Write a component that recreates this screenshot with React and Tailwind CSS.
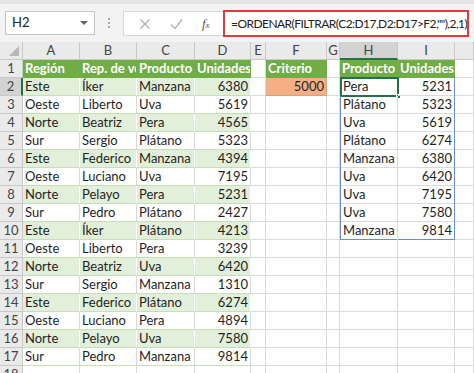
import React from 'react';

const font = { fontFamily: 'Lato, "Open Sans", sans-serif' };

const cols = ['A', 'B', 'C', 'D', 'E', 'F', 'G', 'H', 'I', ''];

const data = [
  ['Este', 'Íker', 'Manzana', 6380],
  ['Oeste', 'Liberto', 'Uva', 5619],
  ['Norte', 'Beatriz', 'Pera', 4565],
  ['Sur', 'Sergio', 'Plátano', 5323],
  ['Este', 'Federico', 'Manzana', 4394],
  ['Oeste', 'Luciano', 'Uva', 7195],
  ['Norte', 'Pelayo', 'Pera', 5231],
  ['Sur', 'Pedro', 'Plátano', 2427],
  ['Este', 'Íker', 'Plátano', 4213],
  ['Oeste', 'Liberto', 'Pera', 3239],
  ['Norte', 'Beatriz', 'Uva', 6420],
  ['Sur', 'Sergio', 'Manzana', 1310],
  ['Este', 'Federico', 'Plátano', 6274],
  ['Oeste', 'Luciano', 'Pera', 4894],
  ['Norte', 'Pelayo', 'Uva', 7580],
  ['Sur', 'Pedro', 'Manzana', 9814],
];

const sorted = [
  ['Pera', 5231],
  ['Plátano', 5323],
  ['Uva', 5619],
  ['Plátano', 6274],
  ['Manzana', 6380],
  ['Uva', 6420],
  ['Uva', 7195],
  ['Uva', 7580],
  ['Manzana', 9814],
];

const grid = 'grid grid-cols-[23px_57px_57px_58px_56px_15px_61px_13px_58px_57px_1fr]';

function Cell({ children, className = '' }) {
  return (
    <div className={`h-[18px] overflow-hidden whitespace-nowrap border-r border-b px-[2px] leading-[17px] text-[13px] text-[#1f1f1f] ${className}`}>
      {children}
    </div>
  );
}

function FormulaBar() {
  return (
    <div className="h-[42px] bg-[#f3f3f3] border-t-[4px] border-[#e4e4e4] flex items-start pt-[7px] pl-[5px]">
      <div className="w-[90px] h-[24px] bg-white border border-[#c6c6c6] flex items-center justify-between pl-[6px] pr-[6px] text-[13px] text-[#222]">
        <span>H2</span>
        <span className="w-0 h-0 border-l-[4px] border-r-[4px] border-t-[4px] border-l-transparent border-r-transparent border-t-[#666]" />
      </div>
      <div className="w-[28px] h-[24px] flex flex-col items-center justify-center gap-[2px]">
        <span className="w-[2px] h-[2px] bg-[#aaa]" />
        <span className="w-[2px] h-[2px] bg-[#aaa]" />
        <span className="w-[2px] h-[2px] bg-[#aaa]" />
      </div>
      <div className="w-[100px] h-[25px] bg-white border border-[#d6d6d6] border-r-0 flex items-center justify-around pl-[6px] pr-[2px]">
        <svg width="12" height="12" viewBox="0 0 12 12"><path d="M1.5 1.5l9 9M10.5 1.5l-9 9" stroke="#b0b0b0" strokeWidth="1.3" /></svg>
        <svg width="13" height="12" viewBox="0 0 13 12"><path d="M1 6.5l4 4L12 1.5" stroke="#b0b0b0" strokeWidth="1.3" fill="none" /></svg>
        <span className="italic text-[13px] leading-none text-[#555] pr-[2px]" style={{ fontFamily: '"Liberation Serif", serif' }}>f<span className="text-[9px]">x</span></span>
      </div>
      <div className="h-[27px] -mt-[1px] w-[246px] border-2 border-[#e0393e] bg-white flex items-center pl-[6px] text-[12px] tracking-[-0.55px] text-[#222] whitespace-nowrap overflow-hidden">
        =ORDENAR(FILTRAR(C2:D17,D2:D17&gt;F2,""),2,1)
      </div>
    </div>
  );
}

export default function App() {
  const rows = [];
  for (let r = 1; r <= 18; r++) rows.push(r);

  return (
    <div className="w-[474px] h-[373px] overflow-hidden bg-white" style={font}>
      <FormulaBar />
      <div className={grid}>
        <div className="h-[18px] bg-[#eaeaea] border-r border-b border-[#c8c8c8] relative">
          <svg className="absolute right-[3px] bottom-[3px]" width="10" height="10" viewBox="0 0 10 10"><path d="M10 0V10H0Z" fill="#b8b8b8" /></svg>
        </div>
        {cols.map((c, i) => (
          <div
            key={i}
            className={`h-[18px] border-r border-b text-center text-[13px] leading-[17px] text-[#444] ${c === 'H' ? 'bg-[#d3d3d3] border-b-2 border-b-[#217346] border-r-[#c8c8c8]' : 'bg-[#eaeaea] border-[#c8c8c8]'}`}
          >
            {c}
          </div>
        ))}

        {rows.map((r) => {
          const header = r === 1;
          const band = r % 2 === 0 && r <= 17;
          const d = data[r - 2];
          const s = sorted[r - 2];
          const tbl = r <= 17;
          const tblBg = header ? 'bg-[#70ad47]' : band ? 'bg-[#e2efda]' : 'bg-white';
          const tblBorder = header ? 'border-[#70ad47]' : band ? 'border-r-white border-b-[#c6e0b4]' : 'border-r-[#d9d9d9] border-b-[#c6e0b4]';
          const txt = header ? 'font-bold text-white' : '';
          const spill = r >= 2 && r <= 10;
          return (
            <React.Fragment key={r}>
              <div
                className={`h-[18px] border-b text-center text-[13px] leading-[17px] text-[#444] ${r === 2 ? 'bg-[#d3d3d3] border-r-2 border-r-[#217346] border-b-[#c8c8c8]' : 'bg-[#eaeaea] border-r border-[#c8c8c8]'}`}
              >
                {r}
              </div>
              {tbl ? (
                <>
                  <Cell className={`${tblBg} ${tblBorder} ${txt}`}>{header ? 'Región' : d[0]}</Cell>
                  <Cell className={`${tblBg} ${tblBorder} ${txt}`}>{header ? 'Rep. de ventas' : d[1]}</Cell>
                  <Cell className={`${tblBg} ${tblBorder} ${txt}`}>{header ? 'Producto' : d[2]}</Cell>
                  <Cell className={`${tblBg} ${tblBorder} ${txt} ${header ? '' : 'text-right'}`}>{header ? 'Unidades' : d[3]}</Cell>
                </>
              ) : (
                <>
                  <Cell className="border-[#dadada]" />
                  <Cell className="border-[#dadada]" />
                  <Cell className="border-[#dadada]" />
                  <Cell className="border-[#dadada]" />
                </>
              )}
              <Cell className="border-[#dadada]" />
              {header ? (
                <Cell className="bg-[#70ad47] border-[#70ad47] font-bold text-white">Criterio</Cell>
              ) : r === 2 ? (
                <Cell className="bg-[#f4b084] border-[#d9a07a] text-right">5000</Cell>
              ) : (
                <Cell className="border-[#dadada]" />
              )}
              <Cell className="border-[#dadada]" />
              {header ? (
                <>
                  <Cell className="bg-[#70ad47] border-[#70ad47] font-bold text-white">Producto</Cell>
                  <Cell className="bg-[#70ad47] border-[#70ad47] font-bold text-white">Unidades</Cell>
                </>
              ) : spill ? (
                <>
                  <div className={`relative h-[18px] border-l border-[#6b8fd6] ${r === 10 ? 'border-b' : ''}`}>
                    <Cell className="absolute inset-0 border-[#dadada] border-b-0">{s[0]}</Cell>
                    {r < 10 && <span className="absolute left-0 right-0 bottom-0 h-px bg-[#dadada]" />}
                    {r === 2 && (
                      <>
                        <span className="absolute -left-[1px] -top-[1px] right-[-1px] bottom-[-1px] border-2 border-[#217346]" />
                        <span className="absolute right-[-3px] bottom-[-3px] w-[5px] h-[5px] bg-[#217346] border border-white" />
                      </>
                    )}
                  </div>
                  <div className={`relative h-[18px] border-r border-[#6b8fd6] ${r === 10 ? 'border-b' : ''}`}>
                    <Cell className="absolute inset-0 border-r-0 border-b-0 text-right">{s[1]}</Cell>
                    {r < 10 && <span className="absolute left-0 right-0 bottom-0 h-px bg-[#dadada]" />}
                  </div>
                </>
              ) : (
                <>
                  <Cell className="border-[#dadada]" />
                  <Cell className="border-[#dadada]" />
                </>
              )}
              <Cell className="border-[#dadada]" />
            </React.Fragment>
          );
        })}
      </div>
    </div>
  );
}
